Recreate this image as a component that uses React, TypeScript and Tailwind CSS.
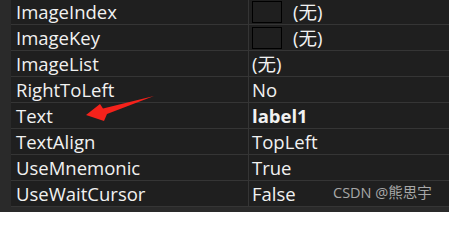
const rows: { name: string; value: string; swatch?: boolean; bold?: boolean }[] = [
  { name: "ImageIndex", value: "(无)", swatch: true },
  { name: "ImageKey", value: "(无)", swatch: true },
  { name: "ImageList", value: "(无)" },
  { name: "RightToLeft", value: "No" },
  { name: "Text", value: "label1", bold: true },
  { name: "TextAlign", value: "TopLeft" },
  { name: "UseMnemonic", value: "True" },
  { name: "UseWaitCursor", value: "False" },
];

export default function App() {
  return (
    <div
      className="relative w-[449px] h-[212px] overflow-hidden bg-[#2a2a2a] pl-[11px] text-[#f1f1f1]"
      style={{ fontFamily: '"Open Sans", "Noto Sans CJK SC", sans-serif' }}
    >
      <div className="-mt-px bg-[#1f1f1f]">
        {rows.map((r) => (
          <div key={r.name} className="flex h-[26px] border-b border-[#353535]">
            <div className="w-[237px] flex items-center pl-[5px] pt-px text-[18.5px] leading-none">{r.name}</div>
            <div className="flex-1 flex items-center border-l border-[#353535] pl-[3px] pt-px text-[18.5px] leading-none">
              {r.swatch && <div className="w-[30px] h-[22px] -mt-px border border-black mr-[11px]" />}
              <span className={r.bold ? "font-bold" : ""}>{r.value}</span>
            </div>
          </div>
        ))}
      </div>

      {/* watermark */}
      <div className="absolute left-[333px] top-[186px] text-[14.5px] leading-none text-[#a8a8a8]">CSDN @熊思宇</div>

      {/* red arrow */}
      <svg className="absolute left-0 top-0" width="449" height="212" viewBox="0 0 449 212">
        <polygon points="86,115 100,104 103,108.5 154,96 107,114 104,121" fill="#f5221b" />
      </svg>
    </div>
  );
}
